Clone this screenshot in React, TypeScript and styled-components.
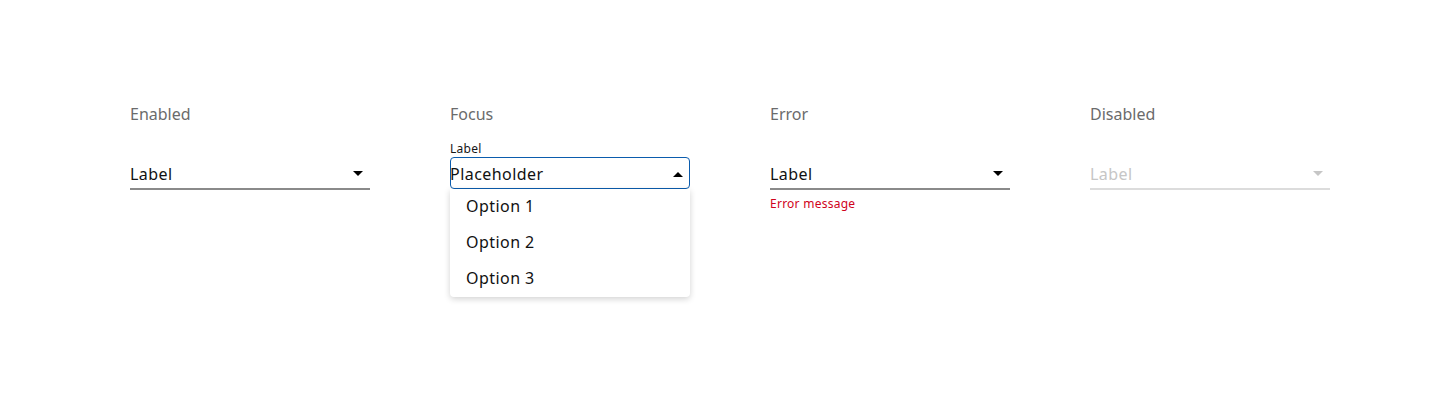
import React from 'react'
import styled, { createGlobalStyle } from 'styled-components'

const GlobalStyle = createGlobalStyle`
    body {
        margin: 0;
        background: #fff;
        font-family: "Noto Sans", "Open Sans", sans-serif;
    }
`

type Variant = 'enabled' | 'focus' | 'error' | 'disabled'

const options = ['Option 1', 'Option 2', 'Option 3']

const Caret = ({ up, color }: { up?: boolean; color: string }) => (
    <svg width="10" height="5" viewBox="0 0 10 5">
        <path d={up ? 'M0 5 L5 0 L10 5 Z' : 'M0 0 L10 0 L5 5 Z'} fill={color} />
    </svg>
)

const SelectField = ({ title, variant }: { title: string; variant: Variant }) => {
    const isFocus = variant === 'focus'
    return (
        <Column>
            <Heading>{title}</Heading>
            <FieldLabel>{isFocus ? 'Label' : ''}</FieldLabel>
            <FieldWrap>
                <Field variant={variant}>
                    <FieldText variant={variant}>{isFocus ? 'Placeholder' : 'Label'}</FieldText>
                    <Caret up={isFocus} color={variant === 'disabled' ? '#c6c6c6' : '#000'} />
                </Field>
                {isFocus ? (
                    <Menu>
                        {options.map(o => <MenuItem key={o}>{o}</MenuItem>)}
                    </Menu>
                ) : null}
            </FieldWrap>
            {variant === 'error' ? <ErrorText>Error message</ErrorText> : null}
        </Column>
    )
}

const App = () => (
    <>
        <GlobalStyle />
        <Page>
            <SelectField title="Enabled" variant="enabled" />
            <SelectField title="Focus" variant="focus" />
            <SelectField title="Error" variant="error" />
            <SelectField title="Disabled" variant="disabled" />
        </Page>
    </>
)

export default App

const Page = styled.div`
    display: flex;
    gap: 80px;
    padding: 103px 130px 0;
    height: 400px;
    box-sizing: border-box;
`

const Column = styled.div`
    width: 240px;
    flex-shrink: 0;
    display: flex;
    flex-direction: column;
`

const Heading = styled.div`
    font-size: 16px;
    line-height: 22px;
    color: #6b6b6b;
    margin-bottom: 16px;
`

const FieldLabel = styled.div`
    font-size: 12px;
    line-height: 16px;
    height: 16px;
    letter-spacing: 0.25px;
    color: #161616;
`

const FieldWrap = styled.div`
    position: relative;
`

const Field = styled.div<{ variant: Variant }>`
    height: 33px;
    box-sizing: border-box;
    display: flex;
    align-items: center;
    justify-content: space-between;
    padding: 2px 7px 0 0;
    ${p => p.variant === 'focus'
        ? 'border: 1px solid #0b5cad; border-radius: 4px; height: 32px; padding-right: 6px; & > span { margin-left: -1px; }'
        : `border-bottom: 2px solid ${p.variant === 'disabled' ? '#dcdcdc' : '#8a8a8a'};`}
`

const FieldText = styled.span<{ variant: Variant }>`
    font-size: 16px;
    line-height: 22px;
    letter-spacing: 0.45px;
    color: ${p => p.variant === 'disabled' ? '#c6c6c6' : '#111'};
`

const Menu = styled.div`
    position: absolute;
    top: 32px;
    left: 0;
    right: 0;
    background: #fff;
    border-radius: 0 0 4px 4px;
    box-shadow: 0 2px 6px rgba(0, 0, 0, 0.18);
`

const MenuItem = styled.div`
    height: 36px;
    box-sizing: border-box;
    display: flex;
    align-items: center;
    padding: 0 0 2px 16px;
    font-size: 16px;
    letter-spacing: 0.45px;
    color: #111;
`

const ErrorText = styled.div`
    margin-top: 6px;
    font-size: 12px;
    line-height: 16px;
    letter-spacing: 0.25px;
    color: #d0021b;
`
